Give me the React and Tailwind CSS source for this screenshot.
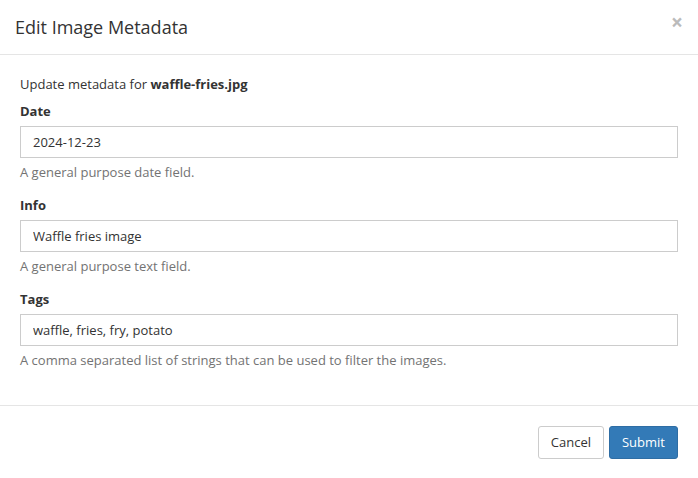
export default function App() {
  const field = (label, value, help) => (
    <div className="mb-[13px]">
      <label className="block font-bold leading-[20px] mb-[5px]">{label}</label>
      <input
        className="block w-full h-[32px] border border-[#ccc] px-3 text-[13px] text-[#333] bg-white focus:outline-none"
        defaultValue={value}
      />
      <p className="mt-[4px] leading-[20px] text-[#737373]">{help}</p>
    </div>
  );

  return (
    <div className="w-[698px] h-[478px] bg-white text-[13px] text-[#333] font-['Open_Sans',sans-serif] flex flex-col">
      {/* Header */}
      <div className="h-[55px] border-b border-[#e5e5e5] flex items-center justify-between pl-[15px] pr-[15px]">
        <h4 className="text-[18px] leading-[20px]">Edit Image Metadata</h4>
        <button className="text-[21px] font-bold leading-none text-[#bbb] -mt-[10px]">×</button>
      </div>

      {/* Body */}
      <div className="px-[20px] pt-[19px]">
        <p className="leading-[20px] mb-[7px]">
          Update metadata for <b>waffle-fries.jpg</b>
        </p>
        {field("Date", "2024-12-23", "A general purpose date field.")}
        {field("Info", "Waffle fries image", "A general purpose text field.")}
        {field(
          "Tags",
          "waffle, fries, fry, potato",
          "A comma separated list of strings that can be used to filter the images."
        )}
      </div>

      {/* Footer */}
      <div className="mt-auto border-t border-[#e5e5e5] flex justify-end gap-[5px] px-[20px] pt-[20px] pb-[19px]">
        <button className="h-[33px] px-3 border border-[#ccc] rounded-[3px] bg-white text-[#333]">
          Cancel
        </button>
        <button className="h-[33px] px-3 border border-[#2e6da4] rounded-[3px] bg-[#337ab7] text-white">
          Submit
        </button>
      </div>
    </div>
  );
}
